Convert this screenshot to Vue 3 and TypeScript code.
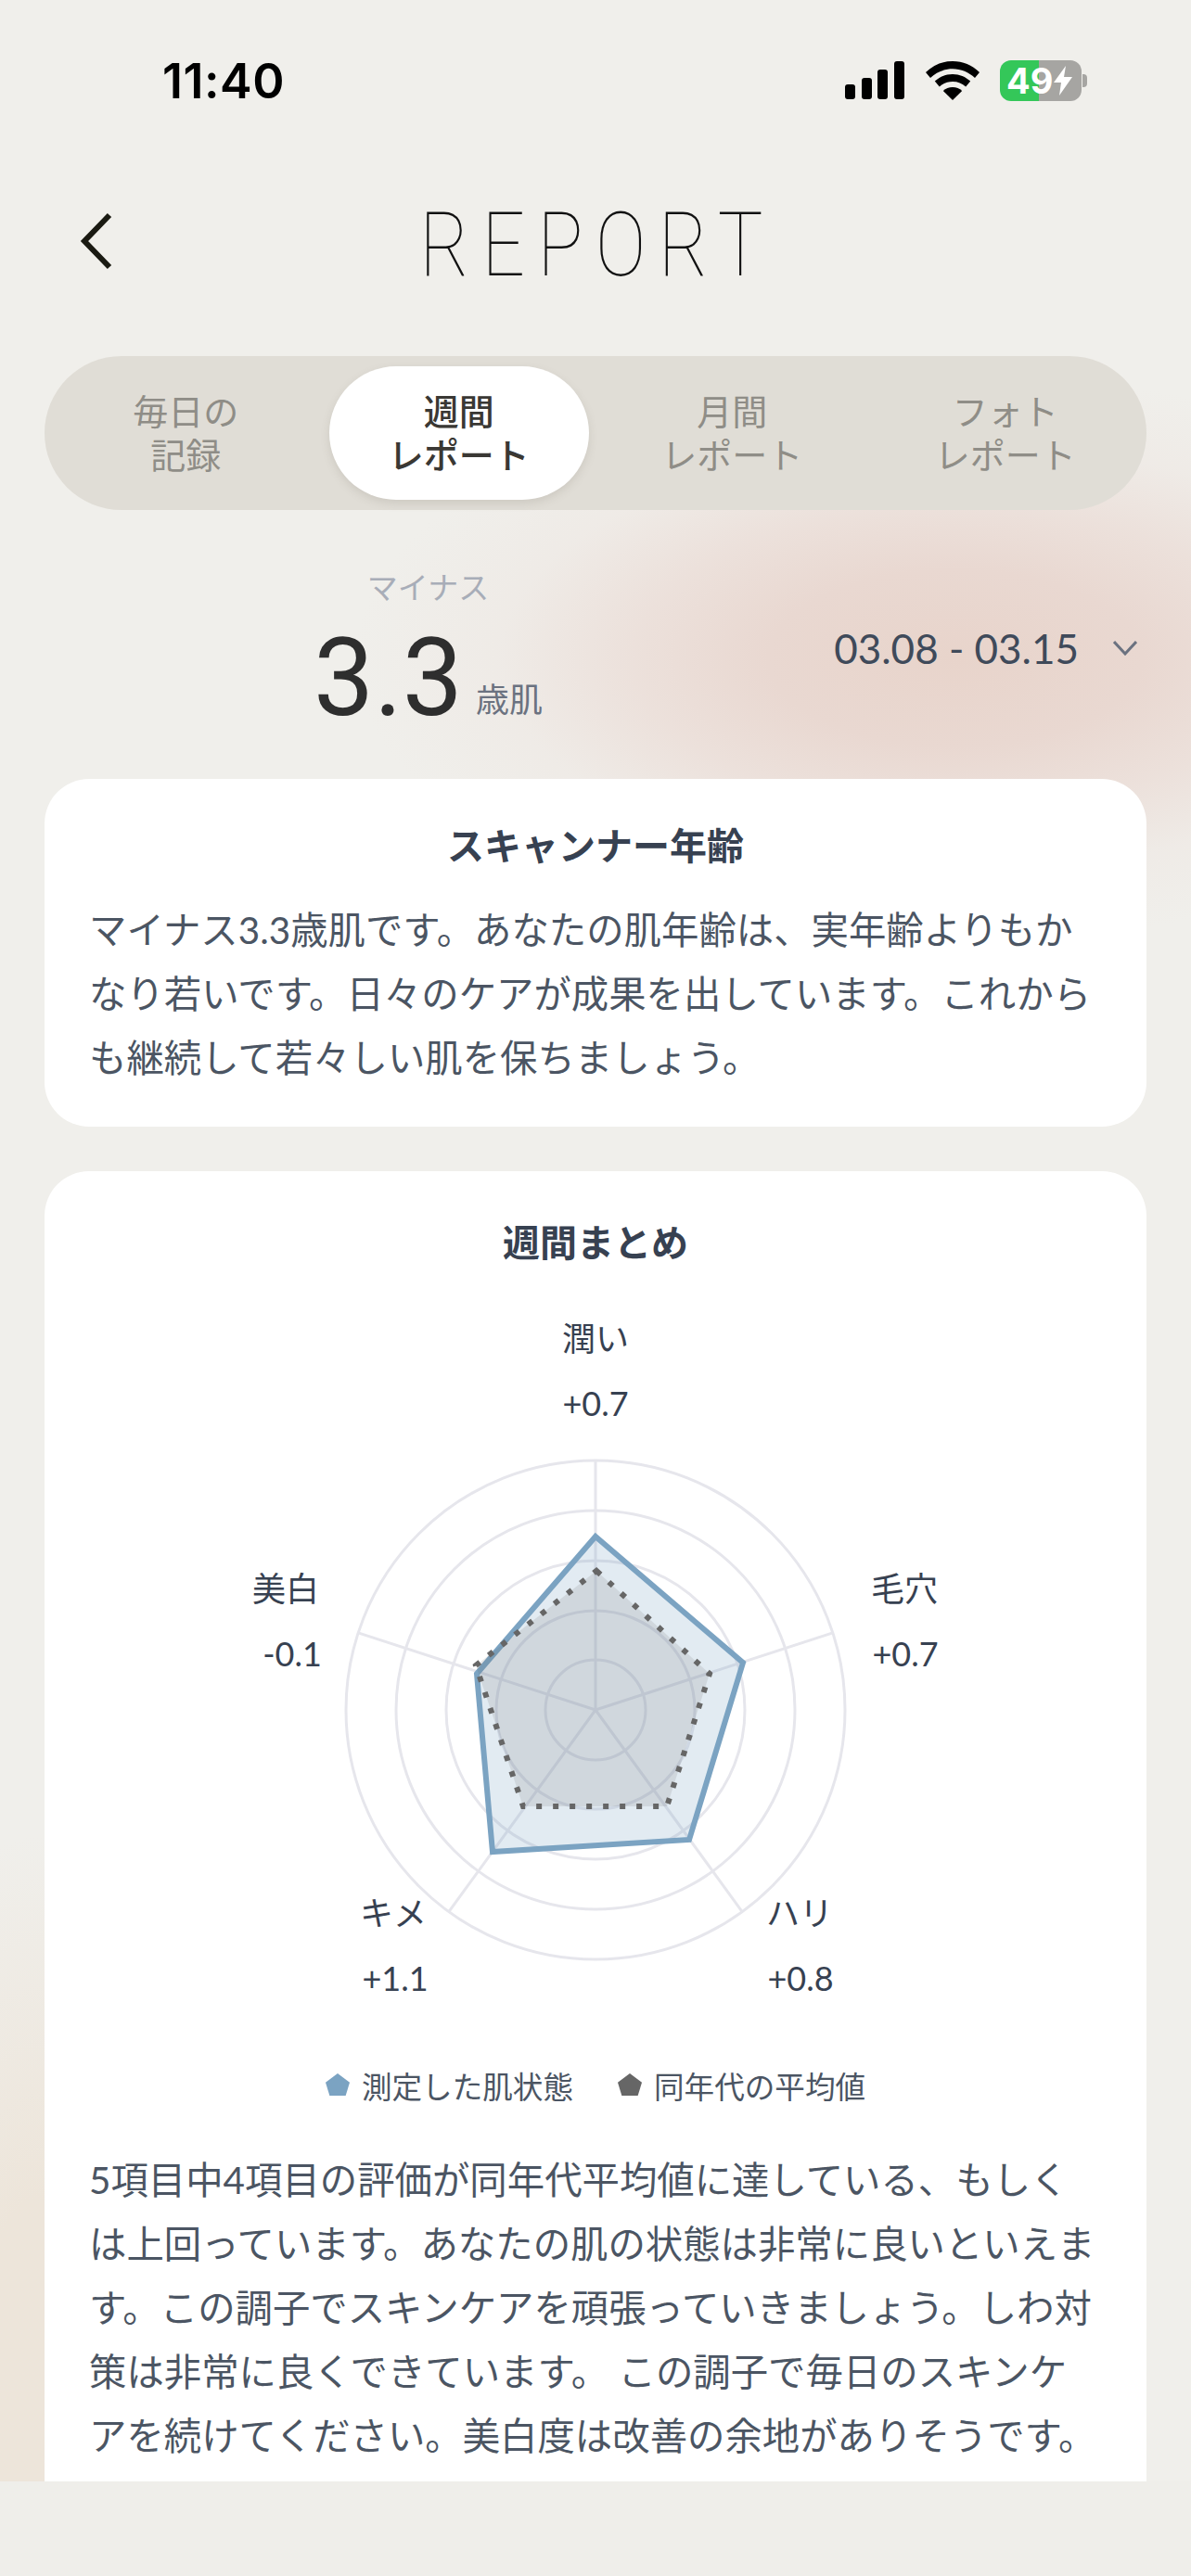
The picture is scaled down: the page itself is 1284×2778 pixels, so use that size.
<template>
  <div class="screen">
    <div class="scroll-area">
      <div class="status-bar">
        <span class="time">11:40</span>
        <div class="status-icons">
          <svg class="signal" viewBox="0 0 65 42" width="65" height="42" fill="#000">
            <rect x="0" y="25" width="11" height="16" rx="3" />
            <rect x="18" y="18" width="11" height="23" rx="3" />
            <rect x="35" y="9" width="11" height="32" rx="3" />
            <rect x="53" y="0" width="11" height="41" rx="3" />
          </svg>
          <svg class="wifi" viewBox="0 0 58 42" width="58" height="42" fill="#000">
            <path d="M29 0C18 0 8 4 0 12l5 6c6.500-6.200 15-9.800 24-9.800S46.500 11.800 53 18l5-6C50 4 40 0 29 0z" />
            <path d="M29 14c-7.500 0-14 2.800-19.200 7.600l5 6C18.500 24 23.500 22 29 22s10.500 2 14.200 5.600l5-6C43 16.800 36.500 14 29 14z" />
            <path d="M29 28c-4 0-7.500 1.400-10.200 4L29 42l10.200-10c-2.700-2.600-6.200-4-10.200-4z" />
          </svg>
          <div class="battery">
            <div class="battery-body">
              <span class="battery-level">49</span>
              <svg class="bolt" viewBox="0 0 20 32" width="20" height="32" fill="#fff">
                <path d="M13 0 0 18h8L6 32 20 12h-9z" />
              </svg>
            </div>
            <span class="battery-nub"></span>
          </div>
        </div>
      </div>

      <header class="page-header">
        <svg class="back" viewBox="0 0 40 64" width="40" height="64" fill="none" stroke="#1a1a12" stroke-width="6">
          <polyline points="34,5 7,33 34,61" />
        </svg>
        <h1 class="page-title">REPORT</h1>
      </header>

      <nav class="tabs">
        <div
          v-for="tab in tabs"
          :key="tab.top"
          class="tab"
          :class="{ active: tab.active }"
        >
          <span>{{ tab.top }}</span>
          <span>{{ tab.bottom }}</span>
        </div>
      </nav>

      <section class="summary">
        <div class="score">
          <div class="score-label">マイナス</div>
          <div class="score-row">
            <span class="score-value">3.3</span>
            <span class="score-unit">歳肌</span>
          </div>
        </div>
        <div class="date-range">
          <span>03.08 - 03.15</span>
          <svg viewBox="0 0 26 16" width="26" height="16" fill="none" stroke="#6b7280" stroke-width="3">
            <polyline points="1,1 13,14 25,1" />
          </svg>
        </div>
      </section>

      <section class="card">
        <h2 class="card-title">スキャンナー年齢</h2>
        <p class="card-text">マイナス3.3歳肌です。あなたの肌年齢は、実年齢よりもかなり若いです。日々のケアが成果を出しています。これからも継続して若々しい肌を保ちましょう。</p>
      </section>

      <section class="card weekly">
        <h2 class="card-title">週間まとめ</h2>
        <svg class="radar" viewBox="0 0 1188 800" width="1188" height="800">
          <circle
            v-for="r in rings"
            :key="r"
            :cx="cx"
            :cy="cy"
            :r="r"
            fill="none"
            stroke="#e6e6ec"
            stroke-width="3"
          />
          <line
            v-for="(p, i) in axisEnds"
            :key="i"
            :x1="cx"
            :y1="cy"
            :x2="p.x"
            :y2="p.y"
            stroke="#e6e6ec"
            stroke-width="3"
          />
          <polygon :points="measured" fill="rgba(123,163,194,0.22)" stroke="#7ba3c2" stroke-width="6" stroke-linejoin="miter" />
          <polygon :points="average" fill="rgba(102,102,102,0.14)" stroke="#666" stroke-width="6" stroke-dasharray="6 12" />
          <g v-for="l in labels" :key="l.name" class="radar-label" text-anchor="middle">
            <text :x="l.x" :y="l.y">{{ l.name }}</text>
            <text :x="l.vx" :y="l.y + 70">{{ l.value }}</text>
          </g>
        </svg>
        <div class="legend">
          <div class="legend-item">
            <svg viewBox="0 0 24 24" width="26" height="26" fill="#7ba3c2"><polygon points="12,1 24,10 20,23 4,23 0,10" /></svg>
            <span>測定した肌状態</span>
          </div>
          <div class="legend-item">
            <svg viewBox="0 0 24 24" width="26" height="26" fill="#666"><polygon points="12,1 24,10 20,23 4,23 0,10" /></svg>
            <span>同年代の平均値</span>
          </div>
        </div>
        <p class="card-text">5項目中4項目の評価が同年代平均値に達している、もしくは上回っています。あなたの肌の状態は非常に良いといえます。この調子でスキンケアを頑張っていきましょう。しわ対策は非常に良くできています。 この調子で毎日のスキンケアを続けてください。美白度は改善の余地がありそうです。</p>
      </section>
    </div>
    <div class="bottom-strip"></div>
  </div>
</template>

<script setup lang="ts">
const tabs = [
  { top: '毎日の', bottom: '記録', active: false },
  { top: '週間', bottom: 'レポート', active: true },
  { top: '月間', bottom: 'レポート', active: false },
  { top: 'フォト', bottom: 'レポート', active: false },
]

const cx = 594
const cy = 444
const rings = [54, 107, 161, 215, 269]

const axisEnds = [0, 1, 2, 3, 4].map((i) => {
  const a = (i * 72 * Math.PI) / 180
  return { x: cx + 269 * Math.sin(a), y: cy - 269 * Math.cos(a) }
})

const measured = '594,257 753,393 695,584 483,597 466,405'
const average = '595,294 717,405 671,548 516,548 465,396'

const labels = [
  { name: '潤い', value: '+0.7', x: 594, vx: 594, y: 57 },
  { name: '毛穴', value: '+0.7', x: 927, vx: 928, y: 327 },
  { name: 'ハリ', value: '+0.8', x: 814, vx: 815, y: 677 },
  { name: 'キメ', value: '+1.1', x: 376, vx: 378, y: 677 },
  { name: '美白', value: '-0.1', x: 260, vx: 267, y: 327 },
]
</script>

<style scoped>
.screen {
  width: 1284px;
  height: 2778px;
  display: flex;
  flex-direction: column;
  overflow: hidden;
  font-family: Lato, "Noto Sans CJK JP", sans-serif;
}

.scroll-area {
  flex: 1;
  min-height: 0;
  overflow: hidden;
  background:
    radial-gradient(ellipse 720px 340px at 1030px 710px, #e8d4cb 0%, #e9d8d1 28%, rgba(235, 221, 215, 0.8) 48%, rgba(237, 227, 222, 0.35) 68%, rgba(238, 232, 228, 0) 90%),
    radial-gradient(ellipse 200px 560px at 40px 2540px, #ede5da 0%, #ede5da 30%, rgba(237, 229, 218, 0) 100%),
    #f0efeb;
}

.status-bar {
  height: 175px;
  display: flex;
  align-items: center;
  justify-content: space-between;
  padding: 0 112px 1px 175px;
  box-sizing: border-box;
}

.time {
  font-family: Inter, sans-serif;
  font-size: 52px;
  font-weight: 600;
  color: #000;
  letter-spacing: 0.5px;
}

.status-icons {
  display: flex;
  align-items: center;
  gap: 22px;
}

.battery {
  display: flex;
  align-items: center;
  gap: 1px;
}

.battery-body {
  width: 88px;
  height: 44px;
  border-radius: 12px;
  background: linear-gradient(90deg, #34c759 0 42px, #a6a5a2 42px);
  display: flex;
  align-items: center;
  padding-left: 7px;
  box-sizing: border-box;
}

.battery-level {
  font-family: Inter, sans-serif;
  font-size: 38px;
  font-weight: 700;
  color: #fff;
  line-height: 1;
}

.bolt {
  margin-left: 1px;
}

.battery-nub {
  width: 5px;
  height: 14px;
  border-radius: 0 4px 4px 0;
  background: #a6a5a2;
}

.page-header {
  height: 175px;
  position: relative;
  display: flex;
  align-items: center;
  justify-content: center;
}

.back {
  position: absolute;
  left: 84px;
  top: 52px;
}

.page-title {
  margin: 0;
  padding: 3px 0 0 6px;
  font-family: Roboto, sans-serif;
  font-size: 96px;
  font-weight: 100;
  color: #111;
  line-height: 1;
  letter-spacing: 16px;
  transform: scaleX(0.85);
}

.tabs {
  margin: 34px 48px 0;
  padding: 11px 5px;
  height: 166px;
  box-sizing: border-box;
  border-radius: 83px;
  background: #e0ddd6;
  display: flex;
}

.tab {
  flex: 1;
  margin: 0 7px;
  display: flex;
  flex-direction: column;
  align-items: center;
  justify-content: center;
  font-size: 38px;
  line-height: 47px;
  color: #8f8d87;
  border-radius: 72px;
}

.tab.active {
  background: #fff;
  color: #3a3834;
  font-weight: 500;
  box-shadow: 0 4px 10px rgba(120, 115, 105, 0.18);
}

.summary {
  height: 290px;
  display: flex;
  justify-content: space-between;
  padding: 60px 58px 0 338px;
  box-sizing: border-box;
}

.score {
  text-align: center;
}

.score-label {
  font-size: 33px;
  line-height: 46px;
  color: #a8adb8;
}

.score-row {
  display: flex;
  align-items: baseline;
  gap: 14px;
  margin-top: 16px;
}

.score-value {
  font-family: Roboto, sans-serif;
  font-size: 116px;
  line-height: 118px;
  color: #2e2e2e;
}

.score-unit {
  font-size: 36px;
  color: #6b7280;
  position: relative;
  top: -3px;
}

.date-range {
  display: flex;
  align-items: center;
  gap: 37px;
  height: 56px;
  margin-top: 61px;
  font-size: 44px;
  color: #3f4a5a;
}

.card {
  margin: 0 48px;
  padding: 48px 48px 40px;
  border-radius: 48px;
  background: #fff;
}

.card-title {
  margin: 0;
  font-size: 40px;
  line-height: 48px;
  font-weight: 700;
  color: #374151;
  text-align: center;
}

.card-text {
  margin: 32px 0 0;
  font-size: 40.4px;
  line-height: 69px;
  color: #4b5563;
}

.weekly {
  margin-top: 48px;
  padding-top: 53px;
  padding-bottom: 160px;
}

.radar {
  display: block;
  margin: 36px -48px 0;
}

.radar-label {
  font-size: 36px;
  fill: #374151;
}

.legend {
  display: flex;
  justify-content: center;
  gap: 48px;
  margin-top: 28px;
  height: 40px;
}

.legend-item {
  display: flex;
  align-items: center;
  gap: 13px;
  font-size: 32.6px;
  color: #4b5563;
}

.legend + .card-text {
  margin-top: 48px;
}

.bottom-strip {
  height: 102px;
  flex: none;
  background: #efeeea;
}
</style>
